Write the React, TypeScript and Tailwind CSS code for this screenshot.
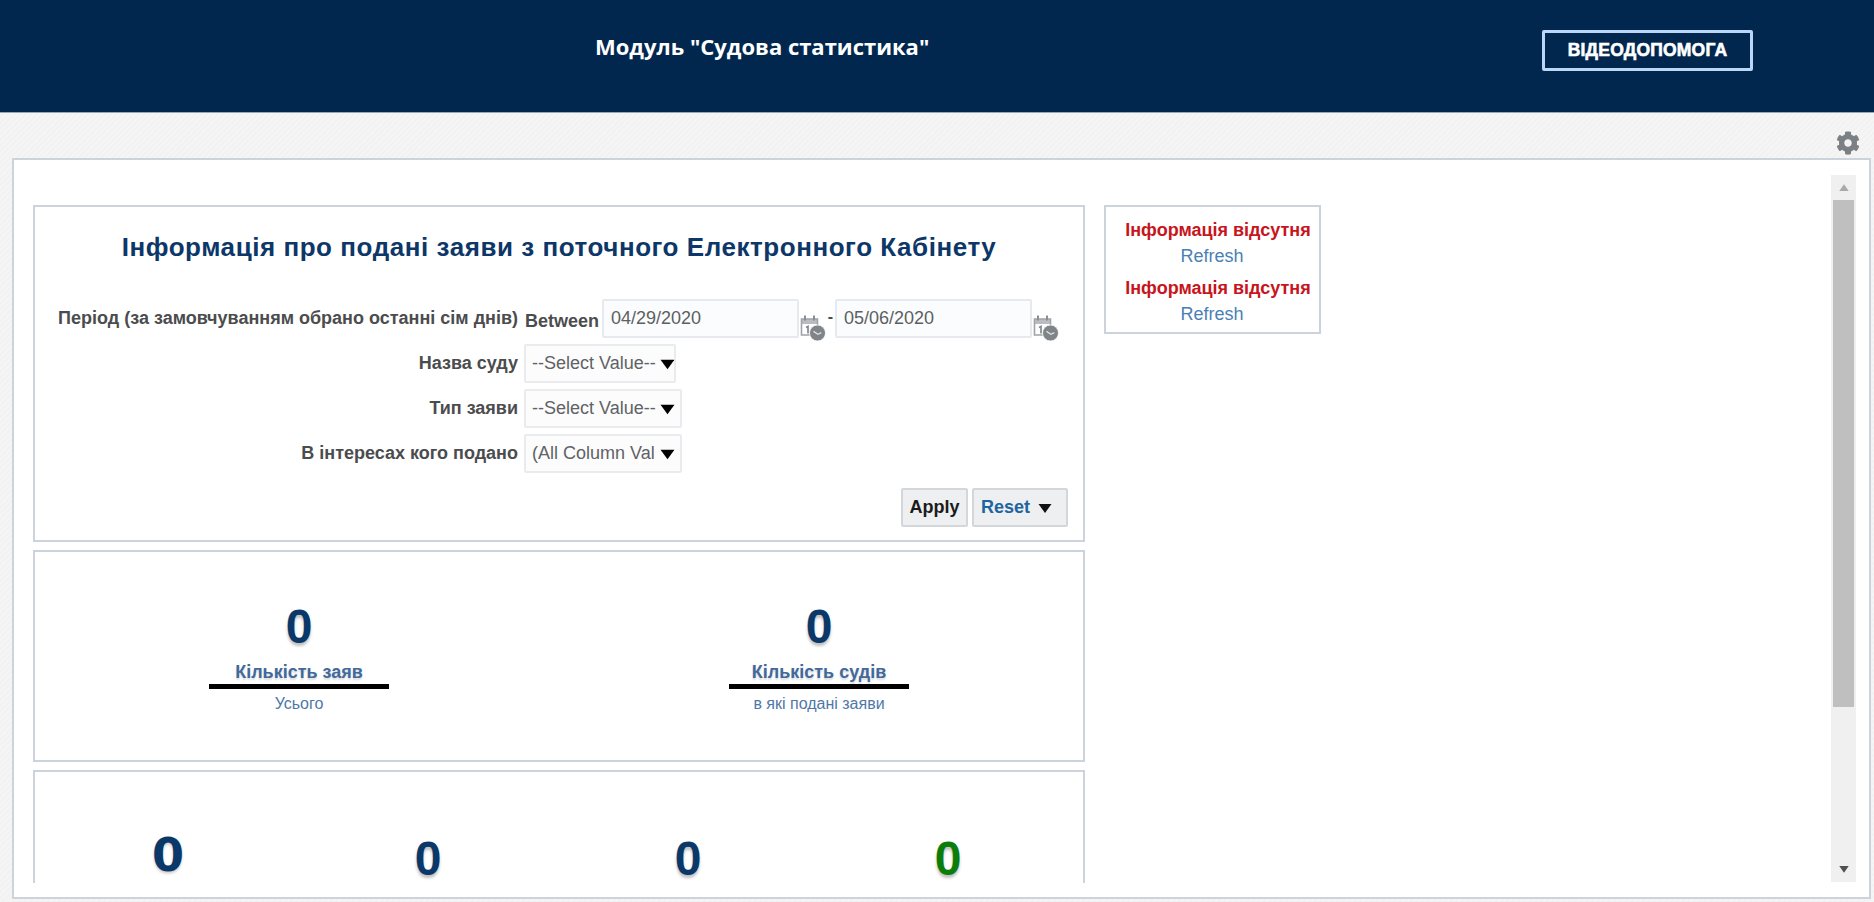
import React from "react";
import { FaCog } from "react-icons/fa";

function Tri({ className }: { className: string }) {
  return (
    <svg viewBox="0 0 14 11" className={className} aria-hidden="true">
      <path d="M0.5 1.5h13L7 10.5z" fill="currentColor" />
    </svg>
  );
}

function CalendarIcon() {
  return (
    <svg viewBox="0 0 26 28" className="w-[26px] h-[28px] shrink-0 self-end -mb-[3px] ml-[1px]" aria-hidden="true">
      <path d="M1.5 6h16v5h-16z" fill="#b9bcc0" />
      <path d="M1.5 6h16v16h-16z" fill="none" stroke="#a0a4a8" strokeWidth="1.6" />
      <path d="M5 2.5v5M14 2.5v5" stroke="#8b8f94" strokeWidth="2" />
      <path d="M6 14.5l2-1v7" fill="none" stroke="#858a8f" strokeWidth="1.7" />
      <circle cx="17.5" cy="20" r="8" fill="#7f8488" stroke="#fff" strokeWidth="0.8" />
      <path d="M13.5 18.4l4.4 2.9 3.4-1.7" fill="none" stroke="#dfe0e2" strokeWidth="1.3" />
    </svg>
  );
}

function DateInput({ value }: { value: string }) {
  return (
    <div className="w-[197px] h-[39px] border-2 border-[#e6e9ed] rounded-[2px] bg-[#fbfcfe] pl-[7px] text-[18px] leading-[35px] text-[#5d5f61]">
      {value}
    </div>
  );
}

function SelectBox({ value, width }: { value: string; width: string }) {
  return (
    <div className={`${width} h-[39px] border-2 border-[#e9ebef] rounded-[2px] bg-[#fcfcfd] flex items-center pl-[6px] text-[18px] text-[#606265] whitespace-nowrap overflow-hidden`}>
      <span className="w-[128px] shrink-0">{value}</span>
      <Tri className="w-[15px] h-[12px] text-black shrink-0" />
    </div>
  );
}

function FormRow({ label, children }: { label: string; children: React.ReactNode }) {
  return (
    <div className="flex items-center h-[39px]">
      <div className="w-[483px] text-right font-bold text-[18px] text-[#4b4c4e] whitespace-nowrap">{label}</div>
      <div className="ml-[6px] flex items-center">{children}</div>
    </div>
  );
}

function Metric({ title, sub }: { title: string; sub: string }) {
  return (
    <div className="flex flex-col items-center">
      <div className="h-[48px] leading-[50px] text-[48px] font-bold text-[#0a3868] [text-shadow:0_3px_3px_rgba(0,0,0,0.25)]">0</div>
      <div className="mt-[12px] h-[20px] leading-[20px] text-[18px] font-bold text-[#41699b] [text-shadow:0_2px_2px_rgba(0,0,0,0.15)]">{title}</div>
      <div className="mt-[2px] w-[180px] h-[5px] bg-black" />
      <div className="mt-[5px] h-[20px] leading-[20px] text-[16px] text-[#4f78a8]">{sub}</div>
    </div>
  );
}

export default function App() {
  return (
    <div className="w-[1874px] h-[902px] overflow-hidden flex flex-col font-['Liberation_Sans',Arial,sans-serif] bg-[#f4f4f4] bg-[repeating-linear-gradient(135deg,#f5f5f5_0px,#f5f5f5_2px,#f2f2f2_2px,#f2f2f2_4px)]">
      <header className="h-[113px] shrink-0 bg-[#01274f] border-b border-[#9aa6b4] flex items-start">
        <div className="ml-[595px] mt-[27px] w-[333px] font-['Open_Sans',sans-serif] font-bold text-[22px] leading-[38px] text-white whitespace-nowrap">
          Модуль "Судова статистика"
        </div>
        <div className="ml-[614px] mt-[30px] w-[211px] h-[41px] border-[3px] border-[#bcd6f7] rounded-[2px] flex items-center justify-center text-white font-bold text-[17.5px] tracking-[0.2px] [-webkit-text-stroke:0.6px_white]">
          ВІДЕОДОПОМОГА
        </div>
      </header>

      <div className="h-[45px] shrink-0 flex items-center justify-end pr-[14px] pt-[14px]">
        <FaCog className="w-[24px] h-[24px] text-[#7b8085]" />
      </div>

      <main className="ml-[12px] mr-[3px] h-[741px] shrink-0 border-2 border-[#ccd3dd] bg-white flex items-start">
        <div className="flex-1 min-w-0 mt-[15px] h-[708px] overflow-hidden pl-[19px] pt-[30px] flex items-start gap-[19px]">
          <div className="w-[1052px] shrink-0 flex flex-col gap-[8px]">
            <section className="h-[337px] border-2 border-[#ccd3dd] bg-white">
              <h1 className="h-[92px] pb-[11px] flex items-center justify-center text-[26px] font-bold text-[#0d3768] tracking-[0.55px] whitespace-nowrap">
                Інформація про подані заяви з поточного Електронного Кабінету
              </h1>
              <div className="flex flex-col gap-[6px]">
                <FormRow label="Період (за замовчуванням обрано останні сім днів)">
                  <span className="font-bold text-[18px] text-[#4b4c4e] mt-[6px] ml-[1px] mr-[3px]">Between</span>
                  <DateInput value="04/29/2020" />
                  <CalendarIcon />
                  <span className="w-[9px] text-center font-bold text-[#4b4c4e] text-[16px] -mt-[4px]">-</span>
                  <DateInput value="05/06/2020" />
                  <CalendarIcon />
                </FormRow>
                <FormRow label="Назва суду">
                  <SelectBox value="--Select Value--" width="w-[152px]" />
                </FormRow>
                <FormRow label="Тип заяви">
                  <SelectBox value="--Select Value--" width="w-[158px]" />
                </FormRow>
                <FormRow label="В інтересах кого подано">
                  <SelectBox value="(All Column Val" width="w-[158px]" />
                </FormRow>
              </div>
              <div className="mt-[15px] pr-[15px] flex justify-end gap-[4px]">
                <div className="w-[67px] h-[39px] border-2 border-[#d3d7db] rounded-[2px] bg-[#edeff1] flex items-center justify-center font-bold text-[18px] text-[#1b1b1b]">
                  Apply
                </div>
                <div className="w-[96px] h-[39px] border-2 border-[#d3d7db] rounded-[2px] bg-[#edeff1] flex items-center pl-[7px] gap-[8px] font-bold text-[18px] text-[#1f639f]">
                  Reset
                  <Tri className="w-[14px] h-[12px] text-[#111]" />
                </div>
              </div>
            </section>

            <section className="h-[212px] border-2 border-[#ccd3dd] bg-white px-[4px] pt-[50px] grid grid-cols-2 items-start">
              <Metric title="Кількість заяв" sub="Усього" />
              <Metric title="Кількість судів" sub="в які подані заяви" />
            </section>

            <section className="h-[240px] border-2 border-[#ccd3dd] bg-white pl-[3px] grid grid-cols-[260px_260px_260px_260px] items-start text-center">
              <div className="pt-[56px] font-['DejaVu_Sans',sans-serif] text-[46px] leading-[54px] font-bold text-[#0a3868] [text-shadow:0_2px_3px_rgba(0,0,0,0.2)]">0</div>
              <div className="pt-[64px] text-[48px] leading-[46px] font-bold text-[#0a3868] [text-shadow:0_3px_3px_rgba(0,0,0,0.25)]">0</div>
              <div className="pt-[64px] text-[48px] leading-[46px] font-bold text-[#0a3868] [text-shadow:0_3px_3px_rgba(0,0,0,0.25)]">0</div>
              <div className="pt-[64px] text-[48px] leading-[46px] font-bold text-[#0a7d0a] [text-shadow:0_3px_3px_rgba(0,0,0,0.25)]">0</div>
            </section>
          </div>

          <aside className="w-[217px] h-[129px] shrink-0 border-2 border-[#ccd3dd] bg-white pt-[11px] pl-[19px] text-center">
            <div className="w-[186px] font-bold text-[18px] leading-[24px] text-[#c8141c] whitespace-nowrap">Інформація відсутня</div>
            <div className="w-[186px] text-[18px] leading-[24px] mt-[2px] text-[#4a7fb5] pr-[12px]">Refresh</div>
            <div className="w-[186px] font-bold text-[18px] leading-[24px] text-[#c8141c] mt-[8px] whitespace-nowrap">Інформація відсутня</div>
            <div className="w-[186px] text-[18px] leading-[24px] mt-[2px] text-[#4a7fb5] pr-[12px]">Refresh</div>
          </aside>
        </div>

        <div className="w-[25px] h-[707px] mt-[15px] mr-[13px] shrink-0 bg-[#f0f0f0] flex flex-col items-center">
          <div className="h-[25px] w-full flex items-center justify-center">
            <Tri className="w-[12px] h-[8px] text-[#a9a9a9] rotate-180" />
          </div>
          <div className="w-[21px] h-[507px] bg-[#bfbfbf]" />
          <div className="flex-1 w-full flex items-end justify-center pb-[9px]">
            <Tri className="w-[12px] h-[8px] text-[#505050]" />
          </div>
        </div>
      </main>
    </div>
  );
}
